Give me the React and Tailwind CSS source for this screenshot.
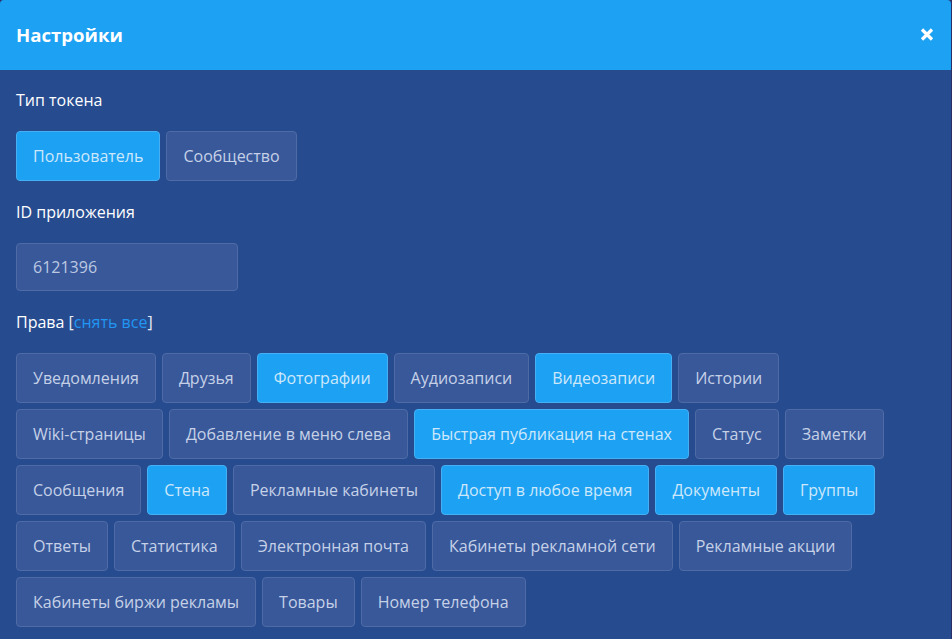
import React from "react";

const rows = [
  [["Уведомления", false], ["Друзья", false], ["Фотографии", true], ["Аудиозаписи", false], ["Видеозаписи", true], ["Истории", false]],
  [["Wiki-страницы", false], ["Добавление в меню слева", false], ["Быстрая публикация на стенах", true], ["Статус", false], ["Заметки", false]],
  [["Сообщения", false], ["Стена", true], ["Рекламные кабинеты", false], ["Доступ в любое время", true], ["Документы", true], ["Группы", true]],
  [["Ответы", false], ["Статистика", false], ["Электронная почта", false], ["Кабинеты рекламной сети", false], ["Рекламные акции", false]],
  [["Кабинеты биржи рекламы", false], ["Товары", false], ["Номер телефона", false]],
];

function Btn({ label, active }) {
  return (
    <div
      className={
        active
          ? "h-[50px] px-4 flex items-center rounded border border-[#45b0f4] bg-[#1da1f2] text-[#cde8fb] text-[16px] leading-6 whitespace-nowrap"
          : "h-[50px] px-4 flex items-center rounded border border-[#4e6ba5] bg-[#38589a] text-[#c6d1e7] text-[16px] leading-6 whitespace-nowrap"
      }
    >
      {label}
    </div>
  );
}

export default function App() {
  return (
    <div
      className="w-[952px] h-[639px] overflow-hidden bg-[#2a2f68]"
      style={{ fontFamily: '"Open Sans", "Noto Sans", sans-serif' }}
    >
      <div className="w-[951px] h-full bg-[#274b8f] rounded-t-[4px] overflow-hidden flex flex-col">
        <div className="h-[70px] shrink-0 bg-[#1da1f2] flex items-center justify-between pl-4 pr-[17px]">
          <div className="text-white font-bold text-[18.6px] leading-6">Настройки</div>
          <svg width="14" height="13" viewBox="0 0 14 13" className="mt-[-1px]">
            <path d="M2 1.5 L12 11.5 M12 1.5 L2 11.5" stroke="#ffffff" strokeWidth="3.2" strokeLinecap="butt" />
          </svg>
        </div>
        <div className="px-4 pt-[18px] flex flex-col">
          <div className="text-white text-[16px] leading-6">Тип токена</div>
          <div className="mt-[19px] flex gap-[6px]">
            <Btn label="Пользователь" active />
            <Btn label="Сообщество" />
          </div>
          <div className="mt-[19px] text-white text-[16px] leading-6">ID приложения</div>
          <div className="mt-[19px] w-[222px] h-[48px] rounded border border-[#4e6ba5] bg-[#38589a] px-4 flex items-center text-[#bcc8e2] text-[16px]">
            6121396
          </div>
          <div className="mt-[19px] text-white text-[16px] leading-6">
            Права <span className="text-[#e6ecf6]">[</span>
            <span className="text-[#2196f3]">снять все</span>
            <span className="text-[#e6ecf6]">]</span>
          </div>
          <div className="mt-[19px] flex flex-col gap-[6px]">
            {rows.map((r, i) => (
              <div key={i} className="flex gap-[6px]">
                {r.map(([l, a]) => (
                  <Btn key={l} label={l} active={a} />
                ))}
              </div>
            ))}
          </div>
        </div>
      </div>
    </div>
  );
}
